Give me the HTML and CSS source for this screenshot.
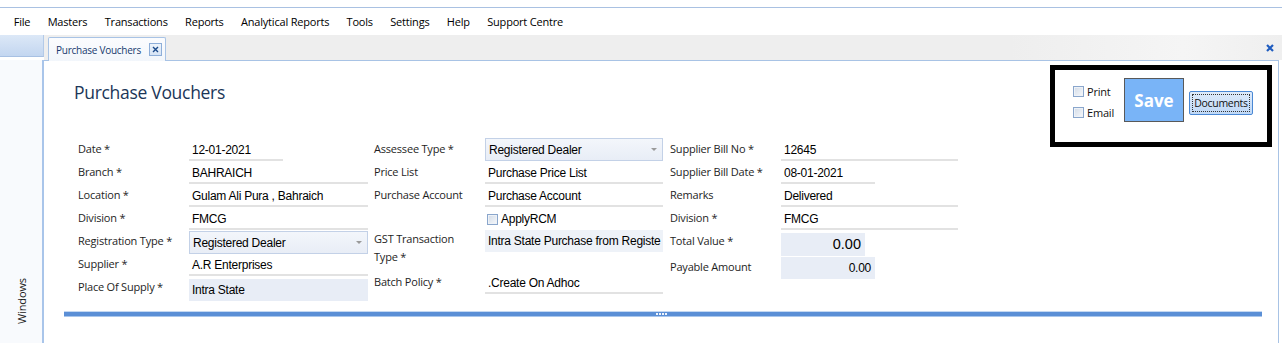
FILE: index.html
```html
<!DOCTYPE html>
<html lang="en">
<head>
<meta charset="utf-8">
<title>Purchase Vouchers</title>
<link rel="stylesheet" href="styles.css">
</head>
<body>
<div class="app">
  <nav class="menubar">
    <span class="mi">File</span>
    <span class="mi">Masters</span>
    <span class="mi">Transactions</span>
    <span class="mi">Reports</span>
    <span class="mi">Analytical Reports</span>
    <span class="mi">Tools</span>
    <span class="mi">Settings</span>
    <span class="mi">Help</span>
    <span class="mi">Support Centre</span>
  </nav>
  <div class="workspace">
    <aside class="sidebar">
      <div class="sb-head"></div>
      <div class="sb-body"><span class="sb-label">Windows</span></div>
    </aside>
    <main class="main">
      <div class="tabstrip">
        <div class="tab">
          <span class="tab-text">Purchase Vouchers</span>
          <span class="tab-x"><svg width="7" height="7" viewBox="0 0 7 7"><path d="M1 1L6 6M6 1L1 6" stroke="#1b4a8a" stroke-width="1.4" fill="none"/></svg></span>
        </div>
        <span class="close-all"><svg width="8" height="8" viewBox="0 0 8 8"><path d="M1 1L7 7M7 1L1 7" stroke="#1f5cbf" stroke-width="2.2" fill="none"/></svg></span>
      </div>
      <section class="panel">
        <h1 class="title">Purchase Vouchers</h1>

        <div class="actions">
          <div class="checks">
            <label class="chk"><span class="box"></span>Print</label>
            <label class="chk"><span class="box"></span>Email</label>
          </div>
          <div class="save">Save</div>
          <div class="docs"><span class="docs-in">Documents</span></div>
        </div>

        <div class="form">
          <div class="col col1">
            <div class="row"><span class="lbl">Date *</span><span class="fld w94">12-01-2021</span></div>
            <div class="row"><span class="lbl">Branch *</span><span class="fld">BAHRAICH</span></div>
            <div class="row"><span class="lbl">Location *</span><span class="fld">Gulam Ali Pura , Bahraich</span></div>
            <div class="row"><span class="lbl">Division *</span><span class="fld">FMCG</span></div>
            <div class="row"><span class="lbl">Registration Type *</span><span class="sel"><span class="sel-text">Registered Dealer</span><span class="arrow"></span></span></div>
            <div class="row"><span class="lbl">Supplier *</span><span class="fld">A.R Enterprises</span></div>
            <div class="row"><span class="lbl">Place Of Supply *</span><span class="fill">Intra State</span></div>
          </div>
          <div class="col col2">
            <div class="row"><span class="lbl">Assessee Type *</span><span class="sel sel-up"><span class="sel-text">Registered Dealer</span><span class="arrow"></span></span></div>
            <div class="row"><span class="lbl">Price List</span><span class="fld">Purchase Price List</span></div>
            <div class="row"><span class="lbl">Purchase Account</span><span class="fld">Purchase Account</span></div>
            <div class="row row-22"><span class="lbl"></span><label class="rcm"><span class="box"></span>ApplyRCM</label></div>
            <div class="row row-gst"><span class="lbl lbl-2">GST Transaction Type *</span><span class="fill fill-gst">Intra State Purchase from Registe</span></div>
            <div class="row"><span class="lbl">Batch Policy *</span><span class="fld">.Create On Adhoc</span></div>
          </div>
          <div class="col col3">
            <div class="row"><span class="lbl">Supplier Bill No *</span><span class="fld">12645</span></div>
            <div class="row"><span class="lbl">Supplier Bill Date *</span><span class="fld w94">08-01-2021</span></div>
            <div class="row"><span class="lbl">Remarks</span><span class="fld">Delivered</span></div>
            <div class="row"><span class="lbl">Division *</span><span class="fld">FMCG</span></div>
            <div class="row row-total"><span class="lbl">Total Value *</span><span class="fill num big w84">0.00</span></div>
            <div class="row row-pay"><span class="lbl">Payable Amount</span><span class="fill num w94">0.00</span></div>
          </div>
        </div>

        <div class="splitter"><span class="grip"></span></div>
      </section>
    </main>
  </div>
</div>
</body>
</html>
```

FILE: styles.css
```css
* { box-sizing: border-box; margin: 0; padding: 0; }
html, body { width: 1282px; height: 351px; overflow: hidden; background: #fff; }
body { font-family: "Open Sans", "Noto Sans", sans-serif; font-size: 11px; color: #1a1a1a; }

.app { padding-top: 7px; height: 351px; }

.menubar {
  display: flex;
  height: 28px;
  border-top: 1px solid #a9c1e2;
  padding-left: 5px;
}
.mi { padding: 0 8.7px; letter-spacing: -0.2px; line-height: 27px; color: #000; }

.workspace { display: flex; height: 308px; }

.sidebar { width: 44px; display: flex; flex-direction: column; }
.sb-head {
  height: 22px;
  background: linear-gradient(#dce8f7, #c3d6f0);
  border-right: 1px solid #b3cae8;
  border-bottom: 1px solid #a8c1e3;
}
.sb-body {
  flex: 1;
  margin-top: 3px;
  background: #f8fafd;
  border-right: 2px solid #a9c5ea;
  display: flex;
  align-items: flex-end;
  justify-content: center;
  padding-bottom: 19px;
}
.sb-label { writing-mode: vertical-rl; transform: rotate(180deg); color: #222; letter-spacing: -0.1px; }

.main { flex: 1; display: flex; flex-direction: column; }

.tabstrip {
  height: 25px;
  background: linear-gradient(90deg, #eeeeee 78%, #f5f5f5 92%, #efefef);
  display: flex;
  align-items: flex-end;
  padding-left: 4px;
}
.tab {
  position: relative;
  z-index: 1;
  width: 118px;
  height: 24px;
  margin-bottom: -1px;
  display: flex;
  align-items: center;
  padding: 0 3px 0 7px;
  background: linear-gradient(#fbfcfe, #f2f6fb);
  border: 1px solid #a8c3e5;
  border-bottom: none;
  border-radius: 2px 2px 0 0;
}
.tab-text { color: #173a6e; font-size: 10px; letter-spacing: -0.25px; white-space: nowrap; }
.tab-x {
  width: 13px; height: 13px;
  margin-left: auto;
  display: flex; align-items: center; justify-content: center;
  border: 1px solid #8eaed8;
  background: linear-gradient(#eef4fb, #d6e4f5);
}
.close-all { margin-left: auto; margin-right: 8px; align-self: center; display: flex; }

.panel {
  flex: 1;
  margin-right: 3px;
  background: #fff;
  border-top: 1px solid #a8c3e5;
  border-right: 1px solid #a8c3e5;
  display: grid;
  grid-template-columns: 1fr auto;
  grid-template-rows: 78px auto auto;
  align-content: start;
}

.title {
  grid-row: 1; grid-column: 1;
  padding: 19px 0 0 30px;
  font-size: 17.5px;
  font-weight: 400;
  line-height: 24px;
  letter-spacing: -0.3px;
  color: #1b3658;
}

.actions {
  grid-row: 1 / 3; grid-column: 2;
  align-self: start;
  margin: 4px 6px 0 0;
  width: 222px; height: 82px;
  border: 5px solid #000;
  display: flex;
  align-items: flex-start;
  padding: 8px 0 0 18px;
}
.checks { width: 51px; margin-top: 3px; display: flex; flex-direction: column; }
.chk { display: flex; align-items: center; height: 21px; color: #111; letter-spacing: -0.2px; }
.box {
  width: 11px; height: 11px;
  margin-right: 3px;
  border: 1px solid #8aa6cc;
  background: linear-gradient(135deg, #d2dbe7, #f6f8fb);
  box-shadow: inset 0 0 0 1px #eef2f7;
}
.save {
  width: 60px; height: 44px;
  background: #79b4f7;
  border: 1px solid #595959;
  color: #fff;
  font-weight: 700;
  font-size: 17px;
  display: flex; align-items: center; justify-content: center;
}
.docs {
  width: 64px; height: 24px;
  margin: 13px 0 0 5px;
  border: 1px solid #4a88d4;
  border-radius: 2px;
  background: linear-gradient(#deebfb, #bfd8f6);
  padding: 2px;
  display: flex;
}
.docs-in {
  flex: 1;
  border: 1px dotted #333;
  display: flex; align-items: center; justify-content: center;
  font-size: 10.5px; letter-spacing: -0.3px; color: #111;
}

.form { grid-row: 2; grid-column: 1; display: flex; padding-left: 34px; }
.col { display: flex; flex-direction: column; }
.col1 { width: 290px; margin-right: 6px; }
.col2 { width: 289px; margin-right: 7px; }
.col3 { width: 288px; }
.row { display: flex; height: 23px; align-items: flex-start; }
.row-22 { height: 22px; align-items: center; }
.row-gst { height: 42px; }
.row-total { margin-top: 2px; height: 23px; }
.row-pay { margin-top: 1px; height: 22px; }

.lbl {
  width: 111px; flex: none;
  padding-top: 2px;
  line-height: 15px;
  letter-spacing: -0.2px;
  color: #1e1e1e;
}
.row-total .lbl { padding-top: 0; }
.lbl-2 { line-height: 18px; padding-top: 0; width: 100px; margin-right: 11px; }

.fld, .fill, .sel-text {
  font-family: "Liberation Sans", Arial, sans-serif;
  font-size: 12px;
  letter-spacing: -0.25px;
  color: #000;
  white-space: nowrap;
  overflow: hidden;
}
.fld {
  flex: 1;
  margin-top: 3px;
  height: 19px;
  line-height: 17px;
  padding-left: 3px;
  border-bottom: 2px solid #e2e2e2;
}

.fill {
  flex: 1;
  height: 22px;
  margin-top: 2px;
  line-height: 22px;
  padding-left: 3px;
  background: #e8edf6;
}
.fill-gst { margin-top: 0; background: #eef2f8; }
.row-total .fill, .row-pay .fill { margin-top: 0; }
.num { text-align: right; padding-right: 4px; }
.big { font-size: 14.5px; line-height: 23px; height: 23px; letter-spacing: 0; }

.fld.w94, .fill.w94 { flex: none; width: 94px; }
.fill.w84 { flex: none; width: 84px; }

.sel {
  flex: 1;
  height: 23px;
  display: flex;
  align-items: center;
  padding: 0 5px 0 3px;
  border: 1px solid #c3d1e7;
  background: linear-gradient(#f3f6fb, #e8edf6);
}
.sel-up { margin-top: -1px; }
.sel-text { flex: 1; padding-top: 1px; }
.arrow {
  width: 0; height: 0;
  border-left: 3px solid transparent;
  border-right: 3px solid transparent;
  border-top: 3px solid #9a9a9a;
}

.rcm {
  display: flex; align-items: center;
  padding-left: 2px;
  font-family: "Liberation Sans", Arial, sans-serif;
  font-size: 12px;
  letter-spacing: -0.25px;
  color: #000;
}
.rcm .box { margin-right: 3px; }

.splitter {
  grid-row: 3; grid-column: 1 / -1;
  margin: 11px 16px 0 20px;
  height: 6px;
  background: #5b8fd6;
  border-top: 1px solid #c4d8f2;
  border-bottom: 1px solid #a9c6ec;
  display: flex;
  align-items: center;
  justify-content: center;
}
.grip {
  width: 11px; height: 2px;
  margin-right: 4px;
  background: repeating-linear-gradient(90deg, #f2f6fc 0 2px, transparent 2px 3px);
}
```
